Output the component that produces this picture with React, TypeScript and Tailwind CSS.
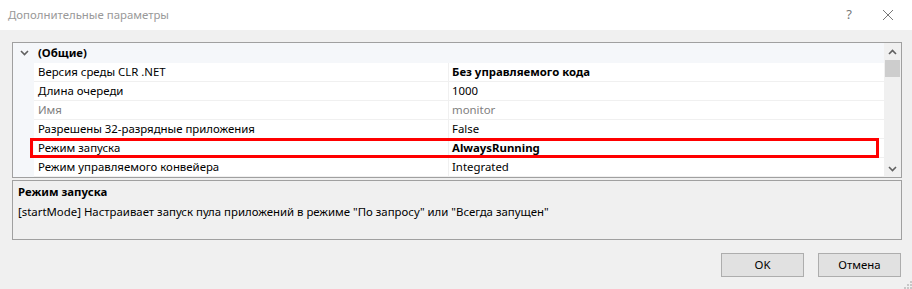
import React from "react";

const rows = [
  { name: "Версия среды CLR .NET", value: "Без управляемого кода", bold: true },
  { name: "Длина очереди", value: "1000" },
  { name: "Имя", value: "monitor", muted: true },
  { name: "Разрешены 32-разрядные приложения", value: "False" },
  { name: "Режим запуска", value: "AlwaysRunning", bold: true },
  { name: "Режим управляемого конвейера", value: "Integrated" },
];

function Chevron({ up = false }: { up?: boolean }) {
  return (
    <svg width="9" height="6" viewBox="0 0 9 6" className={up ? "rotate-180" : ""}>
      <path d="M1 1 L4.5 4.5 L8 1" fill="none" stroke="#606060" strokeWidth="1.6" />
    </svg>
  );
}

export default function App() {
  return (
    <div
      className="w-[912px] h-[289px] bg-[#f0f0f0] flex flex-col relative overflow-hidden text-[11.4px] text-black"
      style={{ fontFamily: '"Segoe UI", "Noto Sans", sans-serif' }}
    >
      {/* title bar */}
      <div className="h-[30px] bg-white flex items-center pl-[8px] shrink-0">
        <span className="text-[#999999] flex-1">Дополнительные параметры</span>
        <span className="text-[#777] w-[14px] text-center mr-[26px] text-[13px]">?</span>
        <svg width="12" height="12" viewBox="0 0 12 12" className="mr-[18px]">
          <path d="M1 1 L11 11 M11 1 L1 11" stroke="#777" strokeWidth="1" />
        </svg>
      </div>

      {/* property grid */}
      <div className="mt-[12px] ml-[12px] w-[890px] h-[136px] border border-[#a0a0a0] bg-white flex relative shrink-0">
        <div className="flex-1 flex flex-col overflow-hidden">
          <div className="h-[20px] bg-[#f5f7fa] flex items-center shrink-0">
            <div className="w-[21px] flex justify-center pl-[1px]">
              <Chevron />
            </div>
            <span className="pl-[4px] font-bold">(Общие)</span>
          </div>
          {rows.map((r) => (
            <div key={r.name} className="h-[19px] flex shrink-0">
              <div className="w-[21px] bg-[#f5f7fa]" />
              <div className="flex-1 flex border-b border-[#f0f0f0]">
                <div className="w-[415px] pl-[4px] flex items-center border-r border-[#f0f0f0]">
                  <span className={r.muted ? "text-[#808080]" : ""}>{r.name}</span>
                </div>
                <div className="flex-1 pl-[3px] flex items-center">
                  <span className={(r.bold ? "font-bold " : "") + (r.muted ? "text-[#808080]" : "")}>{r.value}</span>
                </div>
              </div>
            </div>
          ))}
        </div>
        {/* scrollbar */}
        <div className="w-[17px] bg-[#f0f0f0] flex flex-col items-center shrink-0">
          <div className="h-[17px] flex items-center justify-center">
            <Chevron up />
          </div>
          <div className="w-[15px] h-[17px] bg-[#cdcdcd]" />
          <div className="flex-1" />
          <div className="h-[17px] flex items-center justify-center">
            <Chevron />
          </div>
        </div>
        {/* highlight annotation */}
        <div className="absolute left-[17px] top-[95px] w-[849px] h-[20px] border-[3px] border-[#ff0000]" />
      </div>

      {/* description */}
      <div className="mt-[2px] ml-[12px] w-[890px] h-[60px] border border-[#a0a0a0] px-[5px] pt-[2px] flex flex-col shrink-0">
        <span className="font-bold leading-[18px]">Режим запуска</span>
        <span className="leading-[18px] mt-[2px]">
          [startMode] Настраивает запуск пула приложений в режиме "По запросу" или "Всегда запущен"
        </span>
      </div>

      {/* buttons */}
      <div className="flex justify-end gap-[14px] mt-[13px] mr-[11px]">
        <button className="w-[83px] h-[24px] bg-[#e1e1e1] border border-[#adadad] flex items-center justify-center">OK</button>
        <button className="w-[83px] h-[24px] bg-[#e1e1e1] border border-[#adadad] flex items-center justify-center">Отмена</button>
      </div>

      {/* resize grip */}
      <svg width="10" height="10" viewBox="0 0 10 10" className="absolute right-0 bottom-0">
        {[
          [8, 2], [8, 5], [5, 5], [8, 8], [5, 8], [2, 8],
        ].map(([x, y]) => (
          <rect key={`${x}-${y}`} x={x} y={y} width="2" height="2" fill="#c8c8c8" />
        ))}
      </svg>
    </div>
  );
}
